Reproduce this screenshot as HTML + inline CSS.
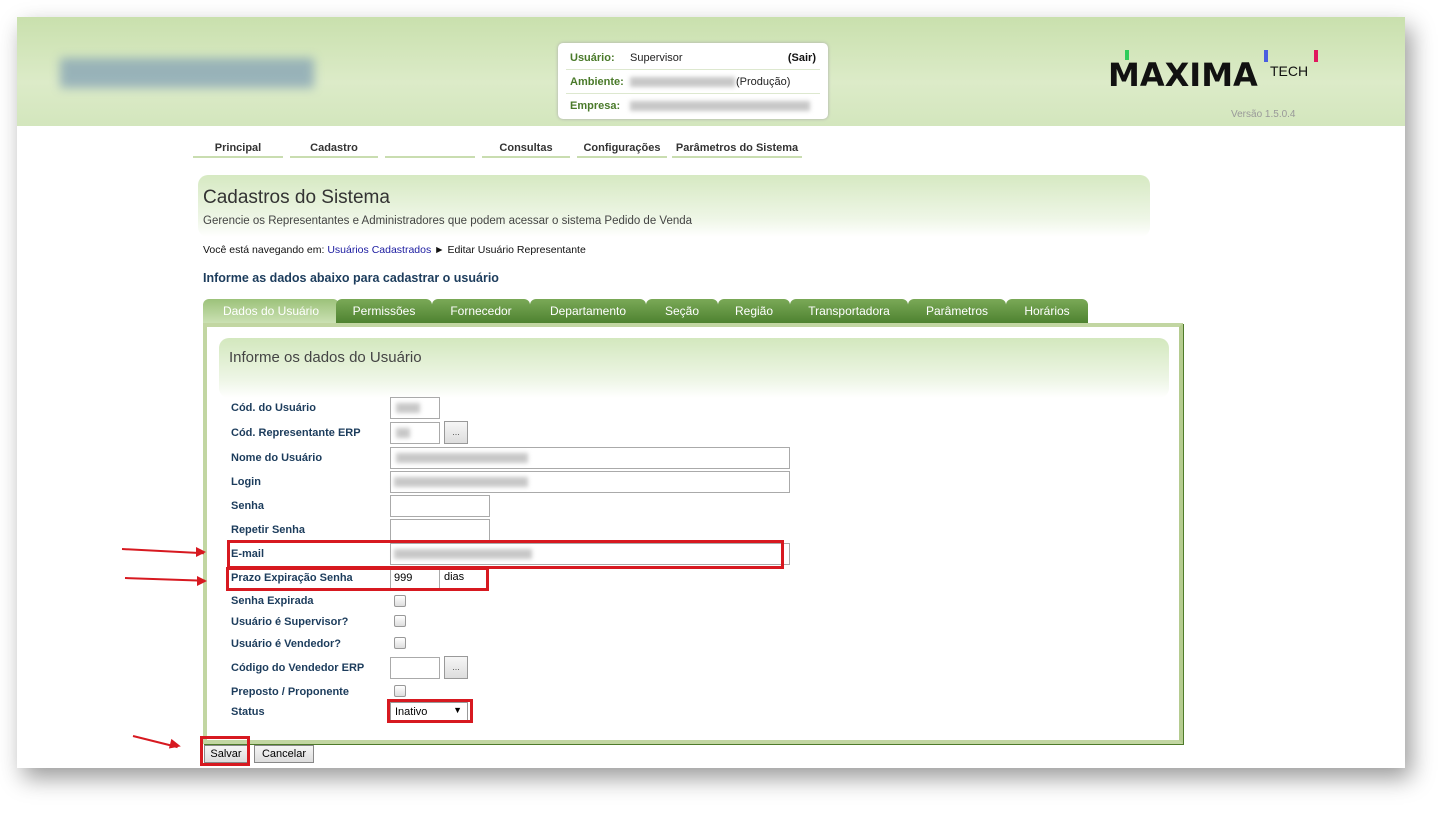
<!DOCTYPE html>
<html><head><meta charset="utf-8"><style>
*{box-sizing:border-box}
body{margin:0;width:1456px;height:817px;background:#fff;font-family:"Liberation Sans",sans-serif;position:relative;overflow:hidden}
.card{position:absolute;left:17px;top:17px;width:1388px;height:751px;background:#fff;box-shadow:6px 10px 22px rgba(0,0,0,.4)}
.hdr{position:absolute;left:17px;top:17px;width:1388px;height:109px;background:linear-gradient(180deg,#c9e0ad,#dcebc8 60%,#d3e6bd)}
.abs{position:absolute}
.lbl{position:absolute;left:231px;font-size:11px;font-weight:bold;color:#1c3c5c}
.in{position:absolute;left:390px;height:22px;border:1px solid #aaa;background:#fff}
.blur{position:absolute;background:#c8c8c8;filter:blur(2px)}
.btn{position:absolute;width:24px;height:23px;border:1px solid #999;background:linear-gradient(#f6f6f6,#ddd);font-size:9px;text-align:center;line-height:20px;color:#555}
.cb{position:absolute;left:394px;width:12px;height:12px;border:1px solid #999;border-radius:2px;background:linear-gradient(#fff,#ddd)}
.red{position:absolute;border:3px solid #d71920}
.tab{position:absolute;top:299px;height:24px;background:linear-gradient(#7aa957,#4e8230);color:#fff;font-size:12px;text-align:center;line-height:24px;border-radius:6px 6px 0 0}
.nav{position:absolute;top:142px;font-size:11px;font-weight:bold;color:#333;text-align:center;border-bottom:2px solid #c9ddb0;height:16px}
.arrow{position:absolute;height:2px;background:#d71920;transform-origin:left center}
</style></head><body>
<div class="card"></div>
<div class="hdr"></div>
<div class="blur" style="left:60px;top:58px;width:254px;height:30px;background:#7d9cb4;filter:blur(5px);opacity:.7"></div>
<div class="abs" style="left:558px;top:43px;width:270px;height:76px;background:#fff;border-radius:5px;box-shadow:0 0 3px #aaa;font-size:11px">
<div class="abs" style="left:12px;top:9px;color:#4a7a2a;font-weight:bold">Usuário:</div>
<div class="abs" style="left:72px;top:9px;color:#222">Supervisor</div>
<div class="abs" style="right:12px;top:9px;font-weight:bold;color:#111">(Sair)</div>
<div class="abs" style="left:8px;right:8px;top:26px;border-top:1px solid #dde8cf"></div>
<div class="abs" style="left:12px;top:33px;color:#4a7a2a;font-weight:bold">Ambiente:</div>
<div class="blur" style="left:72px;top:34px;width:105px;height:10px"></div>
<div class="abs" style="left:178px;top:33px;color:#222">(Produção)</div>
<div class="abs" style="left:8px;right:8px;top:50px;border-top:1px solid #dde8cf"></div>
<div class="abs" style="left:12px;top:57px;color:#4a7a2a;font-weight:bold">Empresa:</div>
<div class="blur" style="left:72px;top:58px;width:180px;height:10px"></div>
</div>
<div class="abs" style="left:1108px;top:57px;font-size:32px;font-weight:bold;color:#111;font-family:'DejaVu Sans',sans-serif;line-height:36px;white-space:nowrap">MAXIMA</div>
<div class="abs" style="left:1270px;top:63px;font-size:14px;color:#111">TECH</div>
<div class="abs" style="left:1125px;top:50px;width:4px;height:10px;background:#2ecc5a"></div>
<div class="abs" style="left:1264px;top:50px;width:4px;height:12px;background:#4a5ee0"></div>
<div class="abs" style="left:1314px;top:50px;width:4px;height:12px;background:#e0185e"></div>
<div class="abs" style="left:1231px;top:109px;font-size:10px;color:#999">Versão 1.5.0.4</div>

<div class="nav" style="left:193px;width:90px">Principal</div>
<div class="nav" style="left:290px;width:88px">Cadastro</div>
<div class="nav" style="left:385px;width:90px"></div>
<div class="nav" style="left:482px;width:88px">Consultas</div>
<div class="nav" style="left:577px;width:90px">Configurações</div>
<div class="nav" style="left:672px;width:130px">Parâmetros do Sistema</div>

<div class="abs" style="left:198px;top:175px;width:952px;height:62px;border-radius:10px;background:linear-gradient(180deg,#d6e9c2,#eef6e6 70%,#fff)"></div>
<div class="abs" style="left:203px;top:187px;font-size:19px;color:#333">Cadastros do Sistema</div>
<div class="abs" style="left:203px;top:215px;font-size:11.5px;color:#444">Gerencie os Representantes e Administradores que podem acessar o sistema Pedido de Venda</div>
<div class="abs" style="left:203px;top:244px;font-size:10.5px;color:#111">Você está navegando em: <span style="color:#1a1aa0">Usuários Cadastrados</span> ► Editar Usuário Representante</div>
<div class="abs" style="left:203px;top:271px;font-size:12.5px;font-weight:bold;color:#1c3c5c">Informe as dados abaixo para cadastrar o usuário</div>

<div class="tab" style="left:203px;width:136px;background:linear-gradient(#9cc27a,#cfe3b8);color:#fff;height:26px">Dados do Usuário</div>
<div class="tab" style="left:336px;width:96px">Permissões</div>
<div class="tab" style="left:432px;width:98px">Fornecedor</div>
<div class="tab" style="left:530px;width:116px">Departamento</div>
<div class="tab" style="left:646px;width:72px">Seção</div>
<div class="tab" style="left:718px;width:72px">Região</div>
<div class="tab" style="left:790px;width:118px">Transportadora</div>
<div class="tab" style="left:908px;width:98px">Parâmetros</div>
<div class="tab" style="left:1006px;width:82px">Horários</div>

<div class="abs" style="left:203px;top:323px;width:980px;height:421px;border:4px solid #c2d6a2;border-right-color:#b5cc90;box-shadow:1px 1px 0 #4e7a2a"></div>
<div class="abs" style="left:219px;top:338px;width:950px;height:60px;border-radius:10px;background:linear-gradient(180deg,#d3e8be,#eef6e6 70%,#fff)"></div>
<div class="abs" style="left:229px;top:349px;font-size:15px;color:#444">Informe os dados do Usuário</div>

<div class="lbl" style="top:402px">Cód. do Usuário</div><div class="in" style="top:397px;width:50px"></div><div class="blur" style="left:396px;top:403px;width:24px;height:10px"></div>
<div class="lbl" style="top:427px">Cód. Representante ERP</div><div class="in" style="top:422px;width:50px"></div><div class="blur" style="left:396px;top:428px;width:14px;height:10px"></div><div class="btn" style="left:444px;top:421px">...</div>
<div class="lbl" style="top:452px">Nome do Usuário</div><div class="in" style="top:447px;width:400px"></div><div class="blur" style="left:396px;top:453px;width:132px;height:10px"></div>
<div class="lbl" style="top:476px">Login</div><div class="in" style="top:471px;width:400px"></div><div class="blur" style="left:394px;top:477px;width:134px;height:10px"></div>
<div class="lbl" style="top:500px">Senha</div><div class="in" style="top:495px;width:100px"></div>
<div class="lbl" style="top:524px">Repetir Senha</div><div class="in" style="top:519px;width:100px"></div>
<div class="lbl" style="top:548px">E-mail</div><div class="in" style="top:543px;width:400px"></div><div class="blur" style="left:394px;top:549px;width:138px;height:10px"></div>
<div class="lbl" style="top:572px">Prazo Expiração Senha</div><div class="in" style="top:567px;width:50px;font-size:11px;padding:4px 3px">999</div><div class="abs" style="left:444px;top:571px;font-size:11px">dias</div>
<div class="lbl" style="top:595px">Senha Expirada</div><div class="cb" style="top:595px"></div>
<div class="lbl" style="top:616px">Usuário é Supervisor?</div><div class="cb" style="top:615px"></div>
<div class="lbl" style="top:638px">Usuário é Vendedor?</div><div class="cb" style="top:637px"></div>
<div class="lbl" style="top:662px">Código do Vendedor ERP</div><div class="in" style="top:657px;width:50px"></div><div class="btn" style="left:444px;top:656px">...</div>
<div class="lbl" style="top:686px">Preposto / Proponente</div><div class="cb" style="top:685px"></div>
<div class="lbl" style="top:706px">Status</div>
<div class="abs" style="left:390px;top:702px;width:78px;height:19px;border:1px solid #999;background:#fff;font-size:11px;padding:3px 4px">Inativo<span style="position:absolute;right:5px;top:2px;font-size:9px">▼</span></div>

<div class="abs" style="left:204px;top:745px;width:44px;height:18px;border:1px solid #888;background:linear-gradient(#f5f5f5,#ddd);font-size:11px;text-align:center;line-height:16px">Salvar</div>
<div class="abs" style="left:254px;top:745px;width:60px;height:18px;border:1px solid #888;background:linear-gradient(#f5f5f5,#ddd);font-size:11px;text-align:center;line-height:16px">Cancelar</div>

<div class="red" style="left:227px;top:540px;width:557px;height:29px"></div>
<div class="red" style="left:226px;top:567px;width:263px;height:24px"></div>
<div class="red" style="left:387px;top:699px;width:86px;height:24px"></div>
<div class="red" style="left:200px;top:736px;width:50px;height:30px"></div>

<div class="arrow" style="left:122px;top:548px;width:82px;transform:rotate(3deg)"></div>
<div class="abs" style="left:196px;top:547px;border-left:10px solid #d71920;border-top:5px solid transparent;border-bottom:5px solid transparent"></div>
<div class="arrow" style="left:125px;top:577px;width:80px;transform:rotate(2deg)"></div>
<div class="abs" style="left:197px;top:576px;border-left:10px solid #d71920;border-top:5px solid transparent;border-bottom:5px solid transparent"></div>
<div class="arrow" style="left:133px;top:735px;width:46px;transform:rotate(14deg)"></div>
<div class="abs" style="left:170px;top:740px;border-left:11px solid #d71920;border-top:5px solid transparent;border-bottom:5px solid transparent;transform:rotate(14deg)"></div>
</body></html>
